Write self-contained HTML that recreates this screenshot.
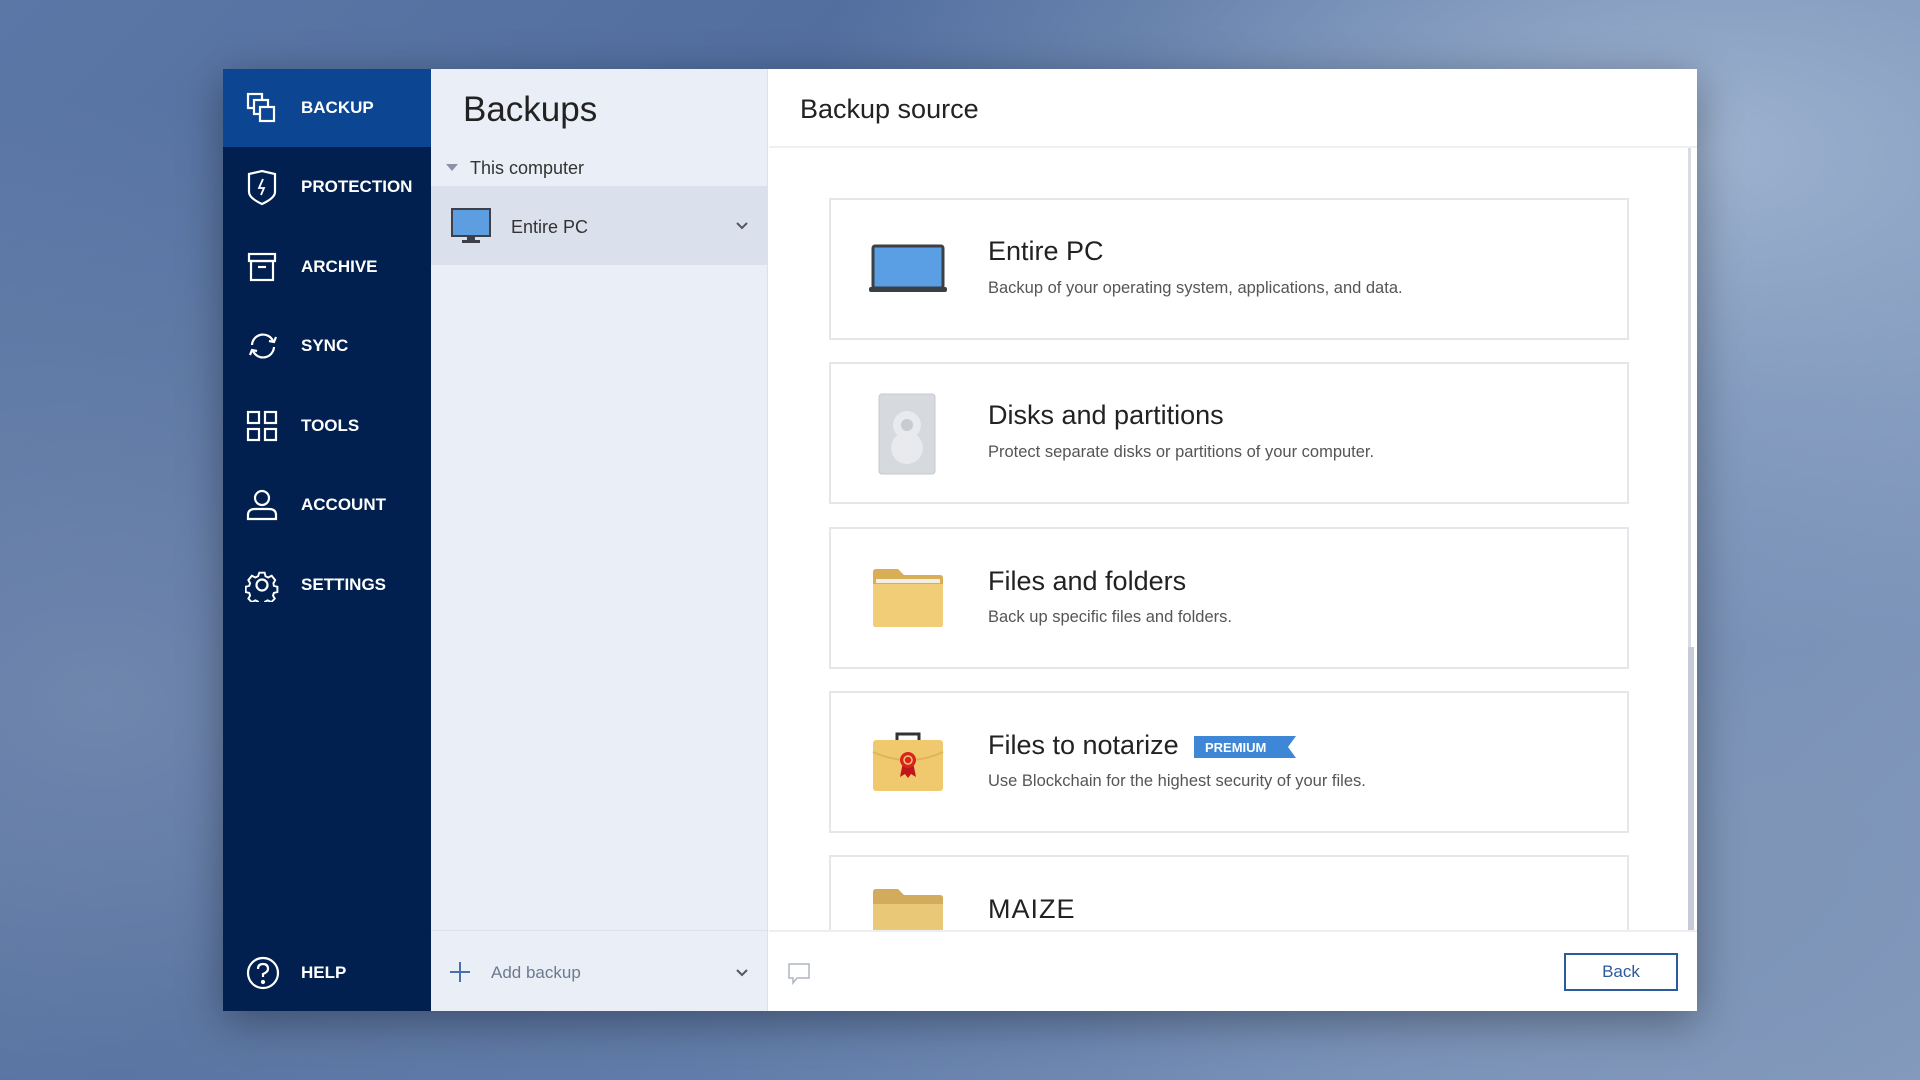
<!DOCTYPE html>
<html><head><meta charset="utf-8"><style>
*{margin:0;padding:0;box-sizing:border-box}
body{width:1920px;height:1080px;overflow:hidden;position:relative;font-family:"Liberation Sans",sans-serif;
background:radial-gradient(ellipse 900px 500px at 1700px 150px,#9db2cf,transparent),radial-gradient(ellipse 700px 500px at 1750px 900px,#7e95b8,transparent),radial-gradient(ellipse 800px 600px at 100px 700px,#6f86ad,transparent),linear-gradient(135deg,#5b77a6 0%,#4e6b9c 40%,#6c86b0 70%,#8aa0c2 100%)}
.a{position:absolute}
.win{left:223px;top:69px;width:1474px;height:942px;box-shadow:0 10px 40px rgba(0,0,0,.35);background:#fff}
.side{left:223px;top:69px;width:208px;height:942px;background:#01204f}
.sel{left:223px;top:69px;width:208px;height:78px;background:#0c4592}
.nav{left:301px;color:#fff;font-weight:bold;font-size:17px;transform:translateY(-50%)}
.ic{left:245px;transform:translateY(-50%)}
.mid{left:431px;top:69px;width:337px;height:942px;background:#eaeef6;border-right:1px solid #dde2ea}
.card{left:829px;width:800px;height:142px;background:#fff;border:2px solid #e4e6ea}
.t{left:988px;font-size:27px;color:#222}
.d{left:988px;font-size:16.5px;color:#555}
</style></head><body>
<div class="a win"></div>
<div class="a side"></div>
<div class="a sel"></div>
<svg class="a ic" style="top:108px" width="34" height="34" viewBox="0 0 34 34" fill="none" stroke="#fff" stroke-width="2.2"><rect x="3" y="3" width="14" height="14"/><rect x="9" y="9" width="14" height="14" fill="#0c4592"/><rect x="15" y="16" width="14" height="14" fill="#0c4592"/></svg>
<div class="a nav" style="top:108px">BACKUP</div>
<svg class="a ic" style="top:187px" width="34" height="38" viewBox="0 0 34 38" fill="none" stroke="#fff" stroke-width="2.2"><path d="M4 6 L17 3 L30 6 V24 Q30 30 17 36 Q4 30 4 24 Z"/><path d="M18 11 L14 20 H19 L16 27" stroke-width="1.8"/></svg>
<div class="a nav" style="top:187px">PROTECTION</div>
<svg class="a ic" style="top:267px" width="34" height="34" viewBox="0 0 34 34" fill="none" stroke="#fff" stroke-width="2.2"><rect x="4" y="4" width="26" height="7"/><rect x="6" y="11" width="22" height="19"/><path d="M13 17h8"/></svg>
<div class="a nav" style="top:267px">ARCHIVE</div>
<svg class="a ic" style="top:346px" width="36" height="34" viewBox="0 0 36 34" fill="none" stroke="#fff" stroke-width="2.2"><path d="M7 16 A11 11 0 0 1 28 12"/><path d="M29 18 A11 11 0 0 1 8 22"/><path d="M24 12 L29 13 L31 8"/><path d="M12 22 L7 21 L5 26"/></svg>
<div class="a nav" style="top:346px">SYNC</div>
<svg class="a ic" style="top:426px" width="34" height="34" viewBox="0 0 34 34" fill="none" stroke="#fff" stroke-width="2.2"><rect x="3" y="3" width="11" height="11"/><rect x="20" y="3" width="11" height="11"/><rect x="3" y="20" width="11" height="11"/><rect x="20" y="20" width="11" height="11"/></svg>
<div class="a nav" style="top:426px">TOOLS</div>
<svg class="a ic" style="top:505px" width="34" height="34" viewBox="0 0 34 34" fill="none" stroke="#fff" stroke-width="2.2"><circle cx="17" cy="10" r="7"/><path d="M3 31 V27 Q3 21 10 21 H24 Q31 21 31 27 V31 Z"/></svg>
<div class="a nav" style="top:505px">ACCOUNT</div>
<svg class="a ic" style="top:585px" width="34" height="34" viewBox="0 0 34 34" fill="none" stroke="#fff" stroke-width="2.2"><circle cx="17" cy="17" r="5.5"/><path d="M14 3h6l1 4 3 1.5 4-2 4 5-2 3.5.5 3 4 1v6l-4 1-1 3 2 3.5-4 4-4-2-3 1.5-1 4h-6l-1-4-3-1.5-4 2-4-4 2-3.5-1-3-4-1v-6l4-1 1-3-2-3.5 4-5 4 2 3-1.5z" transform="scale(.88) translate(2.3 2.3)"/></svg>
<div class="a nav" style="top:585px">SETTINGS</div>
<svg class="a ic" style="top:973px" width="36" height="36" viewBox="0 0 36 36" fill="none" stroke="#fff" stroke-width="2.2"><circle cx="18" cy="18" r="15"/><path d="M13 14 Q13 9 18 9 Q23 9 23 14 Q23 17 18 19 V22"/><circle cx="18" cy="27" r="1" fill="#fff"/></svg>
<div class="a nav" style="top:973px">HELP</div>

<div class="a mid"></div>
<div class="a" style="left:463px;top:90px;font-size:35px;color:#222">Backups</div>
<div class="a" style="left:446px;top:164px;width:0;height:0;border-left:6px solid transparent;border-right:6px solid transparent;border-top:7px solid #8a93a3"></div>
<div class="a" style="left:470px;top:158px;font-size:18px;color:#333">This computer</div>
<div class="a" style="left:431px;top:186px;width:336px;height:79px;background:#dbe1ec"></div>
<svg class="a" style="left:451px;top:208px" width="40" height="36" viewBox="0 0 40 36"><rect x="1" y="1" width="38" height="27" fill="#5c9ee0" stroke="#3d4048" stroke-width="2"/><rect x="16" y="28" width="8" height="4" fill="#3d4048"/><rect x="11" y="32" width="18" height="3" fill="#3d4048"/></svg>
<div class="a" style="left:511px;top:217px;font-size:18px;color:#333">Entire PC</div>
<svg class="a" style="left:735px;top:221px" width="14" height="10" viewBox="0 0 14 10" fill="none" stroke="#556" stroke-width="2"><path d="M2 2l5 5 5-5"/></svg>
<div class="a" style="left:431px;top:930px;width:336px;height:1px;background:#dde2ea"></div>
<div class="a" style="left:450px;top:971px;width:20px;height:2px;background:#4a6fae"></div>
<div class="a" style="left:459px;top:962px;width:2px;height:20px;background:#4a6fae"></div>
<div class="a" style="left:491px;top:963px;font-size:17px;color:#6c7a90">Add backup</div>
<svg class="a" style="left:735px;top:968px" width="14" height="10" viewBox="0 0 14 10" fill="none" stroke="#556" stroke-width="2"><path d="M2 2l5 5 5-5"/></svg>

<div class="a" style="left:800px;top:94px;font-size:27px;color:#222">Backup source</div>
<div class="a" style="left:769px;top:146px;width:928px;height:2px;background:#eef0f3"></div>
<div class="a" style="left:1688px;top:148px;width:3px;height:499px;background:#d8dce2"></div>
<div class="a" style="left:1688px;top:647px;width:6px;height:284px;background:#c6ccd6"></div>

<div class="a card" style="top:198px"></div>
<svg class="a" style="left:868px;top:244px" width="80" height="50" viewBox="0 0 80 50"><rect x="5" y="2" width="70" height="42" rx="2" fill="#5a9fe3" stroke="#3b3f46" stroke-width="3"/><rect x="1" y="43" width="78" height="5" rx="2" fill="#3b3f46"/></svg>
<div class="a t" style="top:236px">Entire PC</div>
<div class="a d" style="top:279px">Backup of your operating system, applications, and data.</div>

<div class="a card" style="top:362px"></div>
<svg class="a" style="left:878px;top:393px" width="58" height="82" viewBox="0 0 58 82"><rect x="1" y="1" width="56" height="80" rx="3" fill="#d6d9de" stroke="#c5c9cf"/><circle cx="29" cy="32" r="14" fill="#e8eaed"/><circle cx="29" cy="55" r="16" fill="#e8eaed"/><circle cx="29" cy="32" r="6" fill="#c8ccd1"/></svg>
<div class="a t" style="top:400px">Disks and partitions</div>
<div class="a d" style="top:443px">Protect separate disks or partitions of your computer.</div>

<div class="a card" style="top:527px"></div>
<svg class="a" style="left:872px;top:568px" width="72" height="60" viewBox="0 0 72 60"><path d="M1 4 Q1 1 4 1 H26 L32 7 H68 Q71 7 71 10 V56 Q71 59 68 59 H4 Q1 59 1 56 Z" fill="#d9ae57"/><rect x="4" y="11" width="64" height="4" fill="#f3efe5"/><path d="M1 16 H71 V56 Q71 59 68 59 H4 Q1 59 1 56 Z" fill="#f1cd78"/></svg>
<div class="a t" style="top:566px">Files and folders</div>
<div class="a d" style="top:608px">Back up specific files and folders.</div>

<div class="a card" style="top:691px"></div>
<svg class="a" style="left:872px;top:732px" width="72" height="60" viewBox="0 0 72 60"><path d="M25 8 V2 H47 V8" fill="none" stroke="#333" stroke-width="3"/><rect x="1" y="8" width="70" height="51" rx="3" fill="#f0c96f"/><path d="M1 20 Q36 36 71 20" fill="none" stroke="#e1b457" stroke-width="2"/><path d="M31 30 L28 45 L33 42 L36 46 L39 42 L44 45 L41 30 Z" fill="#c0161b"/><circle cx="36" cy="28" r="8" fill="#d9231f"/><circle cx="36" cy="28" r="4" fill="none" stroke="#f0c96f" stroke-width="1.5"/></svg>
<div class="a t" style="top:730px">Files to notarize</div>
<svg class="a" style="left:1194px;top:736px" width="102" height="22" viewBox="0 0 102 22"><path d="M0 0H102L94 11L102 22H0Z" fill="#3e86d6"/><text x="11" y="16" font-family="Liberation Sans" font-weight="bold" font-size="13" fill="#fff">PREMIUM</text></svg>
<div class="a d" style="top:772px">Use Blockchain for the highest security of your files.</div>

<div class="a card" style="top:855px;height:100px;border-bottom:none"></div>
<svg class="a" style="left:872px;top:888px" width="72" height="44" viewBox="0 0 72 44"><path d="M1 4 Q1 1 4 1 H26 L32 7 H68 Q71 7 71 10 V44 H1 Z" fill="#d2ab5d"/><path d="M1 16 H71 V44 H1 Z" fill="#e9c877"/></svg>
<div class="a t" style="top:894px;letter-spacing:1px">MAIZE</div>

<div class="a" style="left:769px;top:930px;width:928px;height:81px;background:#fff;border-top:2px solid #eceef2"></div>
<svg class="a" style="left:787px;top:962px" width="24" height="24" viewBox="0 0 24 24" fill="none" stroke="#b0b6c0" stroke-width="1.5"><path d="M2 2H22V16H10L6 21V16H2Z"/></svg>
<div class="a" style="left:1564px;top:953px;width:114px;height:38px;border:2px solid #2b5a9e;color:#2b5a9e;font-size:17px;text-align:center;line-height:34px">Back</div>
</body></html>
